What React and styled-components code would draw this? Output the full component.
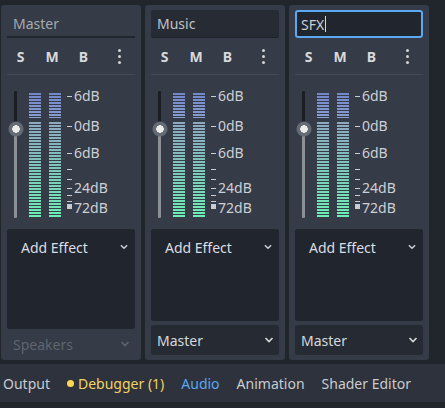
import React from 'react';
import styled, { createGlobalStyle } from 'styled-components';

const GlobalStyle = createGlobalStyle`
  body {
    margin: 0;
    background: #21252c;
    font-family: "Noto Sans", "DejaVu Sans", sans-serif;
  }
`;

const Screen = styled.div`
  width: 445px;
  height: 408px;
  display: flex;
  flex-direction: column;
  background: #21252c;
  overflow: hidden;
`;

const BusRow = styled.div`
  display: flex;
  gap: 4px;
  padding: 5px 0 0 1px;
  height: 355px;
`;

const Bus = styled.div`
  width: 140px;
  box-sizing: border-box;
  padding: 5px 6px 5px;
  background: #353b47;
  border-radius: 3px;
  display: flex;
  flex-direction: column;
`;

const NameField = styled.div`
  height: 28px;
  box-sizing: border-box;
  display: flex;
  align-items: center;
  font-size: 14px;
  padding-left: 6px;

  ${(p) => p.$variant === 'flat' && `
    color: #a6aab0;
    border-bottom: 2px solid #22262e;
  `}
  ${(p) => p.$variant === 'box' && `
    color: #c0c3c7;
    background: #262b34;
    border-radius: 3px;
    border-bottom: 1px solid #1d2127;
  `}
  ${(p) => p.$variant === 'focus' && `
    color: #cbced2;
    background: #21252d;
    border: 2px solid #5aa9f2;
    border-radius: 3px;
    padding-left: 4px;
  `}
`;

const Caret = styled.span`
  display: inline-block;
  width: 1px;
  height: 16px;
  background: #d4d6d9;
  margin-left: 1px;
`;

const ToolRow = styled.div`
  height: 36px;
  display: flex;
  align-items: center;
  margin-left: -2px;
`;

const ToolButton = styled.div`
  width: 31.5px;
  text-align: center;
  font-size: 14px;
  font-weight: 700;
  color: #d7d9dc;
`;

const MoreDots = styled.div`
  width: 32px;
  padding-left: 4px;
  display: flex;
  flex-direction: column;
  align-items: center;
  gap: 3px;

  span {
    width: 3px;
    height: 3px;
    border-radius: 50%;
    background: #d2d4d7;
  }
`;

const Separator = styled.div`
  height: 1px;
  background: #444b58;
`;

const MeterRow = styled.div`
  margin-top: 16px;
  height: 127px;
  display: flex;
`;

const SliderTrack = styled.div`
  position: relative;
  width: 3px;
  margin-left: 7px;
  border-radius: 1px;
  background: linear-gradient(to bottom, #1b1e24 0 38px, #8b9097 38px);
`;

const Knob = styled.div`
  position: absolute;
  left: 1.5px;
  top: 38px;
  width: 15px;
  height: 15px;
  transform: translate(-50%, -50%);
  border-radius: 50%;
  background: radial-gradient(circle, #eceded 0 3.5px, #656b74 4px 7.5px);
`;

const Meter = styled.div`
  width: 12px;
  margin-top: 2px;
  margin-left: ${(p) => p.$offset}px;
  display: flex;
  flex-direction: column;
`;

const MeterSegment = styled.div`
  height: ${(p) => p.$height}px;
  margin-top: ${(p) => p.$gap || 0}px;
  background:
    repeating-linear-gradient(to bottom, transparent 0 2px, #353b47 2px 3px),
    linear-gradient(to bottom, ${(p) => p.$colors});
`;

const Scale = styled.div`
  position: relative;
  flex: 1;
  margin-left: 5px;
`;

const Tick = styled.div`
  position: absolute;
  left: 1px;
  width: 5px;
  height: ${(p) => (p.$block ? 5 : 1)}px;
  background: #c9ccd0;
`;

const ScaleLabel = styled.div`
  position: absolute;
  left: 8px;
  font-size: 14px;
  line-height: 16px;
  color: #cdd0d4;
`;

const EffectsBox = styled.div`
  flex: 1;
  margin-top: 11px;
  background: #21252d;
  border-radius: 3px;
`;

const EffectsHeader = styled.div`
  height: 36px;
  display: flex;
  align-items: center;
  justify-content: space-between;
  padding: 0 7px 0 14px;
  font-size: 14px;
  color: #dadde1;
`;

const OutputSelect = styled.div`
  margin-top: 4px;
  height: ${(p) => (p.$flat ? 22 : 30)}px;
  display: flex;
  align-items: center;
  justify-content: space-between;
  padding: ${(p) => (p.$flat ? '0 5px 0 6px' : '0 5px 0 6px')};
  font-size: 14px;
  border-radius: 3px;
  color: ${(p) => (p.$flat ? '#5f656e' : '#d6d8db')};
  background: ${(p) => (p.$flat ? 'transparent' : '#262b33')};
`;

const TabBar = styled.div`
  margin-top: 4px;
  height: 38px;
  background: #2d323c;
  display: flex;
  align-items: center;
  gap: 17px;
  padding-left: 3px;
  font-size: 14px;
`;

const Tab = styled.div`
  display: flex;
  align-items: center;
  gap: 4px;
  color: ${(p) => p.$color || '#c9ccd0'};
`;

const Dot = styled.span`
  width: 7px;
  height: 7px;
  border-radius: 50%;
  background: #ffd84f;
`;

function Chevron({ color = '#cfd2d6', w = 9 }) {
  return (
    <svg width={w} height="6" viewBox="0 0 9 6">
      <polyline points="1,1 4.5,4.5 8,1" fill="none" stroke={color} strokeWidth="1.6" />
    </svg>
  );
}

const scale = [
  { y: 5, label: '6dB' },
  { y: 35, label: '0dB' },
  { y: 62, label: '6dB' },
  { y: 78 },
  { y: 88 },
  { y: 97, label: '24dB' },
  { y: 104 },
  { y: 110 },
  { y: 117, label: '72dB', block: true },
];

function MeterBar({ offset }) {
  return (
    <Meter $offset={offset}>
      <MeterSegment $height={25} $colors="#7287cb, #899fd3" />
      <MeterSegment $height={95} $gap={4} $colors="#8ea8c2, #80c3bb 45%, #6defb5" />
    </Meter>
  );
}

function AudioBus({ name, variant, output, flatOutput }) {
  return (
    <Bus>
      <NameField $variant={variant}>
        {name}
        {variant === 'focus' && <Caret />}
      </NameField>
      <ToolRow>
        <ToolButton>S</ToolButton>
        <ToolButton>M</ToolButton>
        <ToolButton>B</ToolButton>
        <MoreDots>
          <span />
          <span />
          <span />
        </MoreDots>
      </ToolRow>
      <Separator />
      <MeterRow>
        <SliderTrack>
          <Knob />
        </SliderTrack>
        <MeterBar offset={12} />
        <MeterBar offset={8} />
        <Scale>
          {scale.map((s, i) => (
            <React.Fragment key={i}>
              <Tick
                $block={s.block}
                style={{ top: s.block ? s.y - 4 : s.y }}
              />
              {s.label && <ScaleLabel style={{ top: s.y - 8 }}>{s.label}</ScaleLabel>}
            </React.Fragment>
          ))}
        </Scale>
      </MeterRow>
      <EffectsBox>
        <EffectsHeader>
          Add Effect
          <Chevron w={8} />
        </EffectsHeader>
      </EffectsBox>
      <OutputSelect $flat={flatOutput}>
        {output}
        <Chevron color={flatOutput ? '#5f656e' : '#d6d8db'} w={10} />
      </OutputSelect>
    </Bus>
  );
}

export default function App() {
  return (
    <Screen>
      <GlobalStyle />
      <BusRow>
        <AudioBus name="Master" variant="flat" output="Speakers" flatOutput />
        <AudioBus name="Music" variant="box" output="Master" />
        <AudioBus name="SFX" variant="focus" output="Master" />
      </BusRow>
      <TabBar>
        <Tab>Output</Tab>
        <Tab $color="#f3d262">
          <Dot />
          Debugger (1)
        </Tab>
        <Tab $color="#5ba7ef">Audio</Tab>
        <Tab>Animation</Tab>
        <Tab>Shader Editor</Tab>
      </TabBar>
    </Screen>
  );
}
